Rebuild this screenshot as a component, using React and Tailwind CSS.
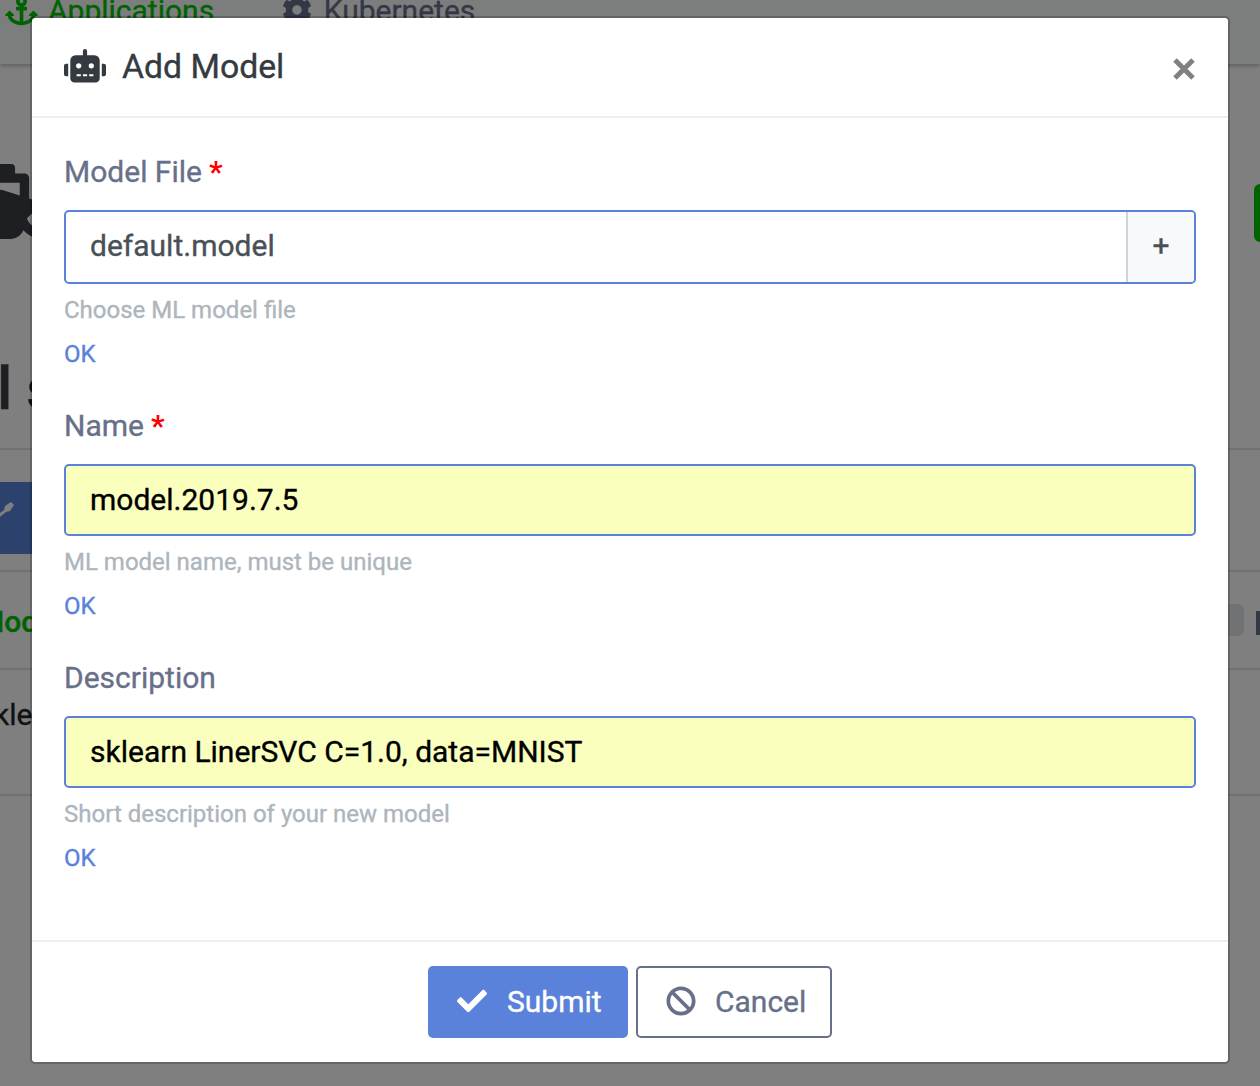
import React from "react";
import { FaAnchor, FaCog, FaShip, FaRobot, FaCheck, FaBan } from "react-icons/fa";

function Page() {
  return (
    <div className="flex h-[1086px] w-[1260px] flex-col overflow-hidden bg-white whitespace-nowrap">
      <nav className="z-10 flex h-[64px] shrink-0 items-start bg-[#f8fcfa] text-[30px] leading-[36px] text-[#687089] shadow-[0_2px_4px_rgba(0,0,0,0.25)]">
        <div className="-mt-[7px] ml-[5px] flex gap-[10px] text-[#00c400]">
          <FaAnchor className="mt-[1px] h-[33px] w-[33px]" />
          <span>Applications</span>
        </div>
        <div className="-mt-[7px] ml-[68px] flex gap-[11.5px]">
          <FaCog className="mt-[2px] size-[30px]" />
          <span>Kubernetes</span>
        </div>
      </nav>
      <header className="flex h-[384px] shrink-0 justify-between text-[#3a3e46]">
        <div className="flex flex-col pt-[100px]">
          <FaShip className="-ml-[46px] h-[75px] w-[94px]" />
          <h1 className="mt-[115px] -ml-[3px] flex gap-[14px] text-[60px] leading-[70px] font-medium">
            <span>l</span>
            <span className="text-[#212529]">s</span>
          </h1>
        </div>
        <div className="mt-[120px] -mr-[94px] h-[58px] w-[100px] rounded-[6px] bg-[#00c400]" />
      </header>
      <section className="flex h-[122px] shrink-0 items-start border-t-2 border-[#dee2e6] pt-[32px]">
        <div className="h-[72px] w-[200px] bg-[#5a82da] pt-[19px] text-[#ffffff]">
          <svg viewBox="0 0 16 18" className="h-[18px] w-[16px]" fill="currentColor">
            <path d="M0 12 4 9 5 5 11 1 14 4 10 10 6 11 1 15 0 16Z" />
          </svg>
        </div>
      </section>
      <section className="flex h-[98px] shrink-0 items-center justify-between border-t-2 border-[#dee2e6] text-[30px]">
        <b className="mt-[3px] -ml-[22px] font-medium text-[#00c400]">Mod</b>
        <div className="mr-[-98px] flex items-center gap-[12px]">
          <span className="h-[32px] w-[60px] rounded-[6px] bg-[#e0e4e8]" />
          <span className="mt-[6px] h-[24px] w-[102px] bg-[#687089]" />
        </div>
      </section>
      <section className="flex h-[128px] shrink-0 border-y-2 border-[#dee2e6] pt-[27px] text-[30px] leading-[36px] text-[#212529]">
        <span className="-ml-[6px]">kle</span>
      </section>
    </div>
  );
}

function Field({ label, required, value, help, file }) {
  return (
    <div className="mb-[36px] flex flex-col">
      <label className="flex h-[36px] items-center gap-[7px] text-[30px] leading-[36px] text-[#687089]">
        {label}
        {required && <span className="font-bold text-[#ff0000] [-webkit-text-stroke:0]">*</span>}
      </label>
      {file ? (
        <div className="mt-[20px] flex h-[74px] overflow-hidden rounded-[5px] border-2 border-[#5a82da] text-[30px] text-[#495057]">
          <span className="flex flex-1 items-center pb-[3px] pl-[24px]">{value}</span>
          <span className="flex w-[68px] items-center justify-center border-l-2 border-[#ced4da] bg-[#f7f9fb] pb-[4px]">+</span>
        </div>
      ) : (
        <div className="mt-[20px] flex h-[72px] items-center rounded-[5px] border-2 border-[#5a82da] bg-[#faffbd] pb-[1px] pl-[24px] text-[30px] text-black">
          {value}
        </div>
      )}
      <small className="mt-[8px] text-[24px] leading-[36px] text-[#adb5bd]">{help}</small>
      <span className="mt-[8px] text-[24px] leading-[36px] text-[#5a82da]">OK</span>
    </div>
  );
}

export default function App() {
  return (
    <div className="relative h-[1086px] w-[1260px] overflow-hidden font-['Roboto',sans-serif] [-webkit-text-stroke:0.35px_currentColor]">
      <Page />
      <div className="absolute inset-0 z-20 bg-black/50 pt-[16px] pl-[30px]">
        <div className="flex h-[1048px] w-[1200px] flex-col rounded-[5px] border-2 border-black/20 bg-white bg-clip-padding">
          <div className="flex h-[100px] shrink-0 items-center justify-between border-b-2 border-[#eeeeee] px-[32px] text-[#343a40]">
            <h2 className="-mt-[2px] flex items-center gap-[16px] text-[33.75px] leading-[40px]">
              <FaRobot className="h-[33.6px] w-[42px]" />
              <span className="mt-[2px]">Add Model</span>
            </h2>
            <svg viewBox="0 0 22 22" className="mt-[4px] mr-[1px] size-[22px]" stroke="#808080" strokeWidth="5">
              <path d="M2 2 20 20M20 2 2 20" />
            </svg>
          </div>
          <div className="flex-1 px-[32px] pt-[36px]">
            <Field label="Model File" required file value="default.model" help="Choose ML model file" />
            <Field label="Name" required value="model.2019.7.5" help="ML model name, must be unique" />
            <Field label="Description" value="sklearn LinerSVC C=1.0, data=MNIST" help="Short description of your new model" />
          </div>
          <div className="flex h-[122px] shrink-0 justify-center gap-[8px] border-t-2 border-[#eeeeee] pt-[24px] text-[30px]">
            <button className="flex h-[72px] w-[200px] items-center rounded-[5px] bg-[#5a82da] pb-[2px] pl-[29px] text-white">
              <FaCheck className="size-[30px]" />
              <span className="ml-[20px]">Submit</span>
            </button>
            <button className="flex h-[72px] w-[196px] items-center rounded-[5px] border-2 border-[#687089] pb-[2px] pl-[27.5px] text-[#687089]">
              <FaBan className="size-[30px]" />
              <span className="ml-[19.5px]">Cancel</span>
            </button>
          </div>
        </div>
      </div>
    </div>
  );
}
